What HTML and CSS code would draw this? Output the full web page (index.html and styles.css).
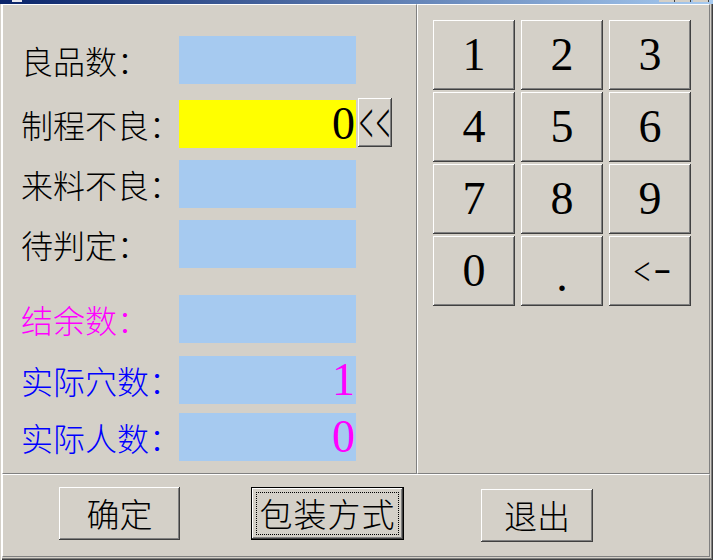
FILE: index.html
```html
<!DOCTYPE html>
<html lang="zh-CN">
<head>
<meta charset="utf-8">
<title>数量输入</title>
<link rel="stylesheet" href="styles.css">
</head>
<body>
<div class="titlebar">
  <span class="ticon"></span>
  <span class="tbtns"><i></i><i></i><i class="close"></i></span>
</div>
<div class="window">
  <div class="panel left">
    <div class="row"><span class="label">良品数：</span><span class="field"></span></div>
    <div class="row"><span class="label">制程不良：</span><span class="field yellow">0</span><button class="btn back"><span class="chev">&lt;&lt;</span></button></div>
    <div class="row"><span class="label">来料不良：</span><span class="field"></span></div>
    <div class="row"><span class="label">待判定：</span><span class="field"></span></div>
    <div class="row"><span class="label magenta">结余数：</span><span class="field"></span></div>
    <div class="row"><span class="label blue">实际穴数：</span><span class="field magenta">1</span></div>
    <div class="row"><span class="label blue">实际人数：</span><span class="field magenta">0</span></div>
  </div>
  <div class="panel right">
    <div class="keypad">
      <button class="btn key">1</button>
      <button class="btn key">2</button>
      <button class="btn key">3</button>
      <button class="btn key">4</button>
      <button class="btn key">5</button>
      <button class="btn key">6</button>
      <button class="btn key">7</button>
      <button class="btn key">8</button>
      <button class="btn key">9</button>
      <button class="btn key">0</button>
      <button class="btn key dot">.</button>
      <button class="btn key bs"><span class="lt">&lt;</span><span class="hy">-</span></button>
    </div>
  </div>
  <div class="panel bottom">
    <button class="btn cmd b-ok">确定</button>
    <button class="btn cmd b-pack">包装方式<span class="focus"></span></button>
    <button class="btn cmd b-exit">退出</button>
  </div>
</div>
</body>
</html>
```

FILE: styles.css
```css
* { box-sizing: border-box; }
html, body { margin: 0; padding: 0; }
body {
  width: 713px;
  height: 560px;
  overflow: hidden;
  background: #d4d0c8;
  font-family: "Noto Sans CJK SC", sans-serif;
  color: #000;
}
.titlebar {
  height: 4px;
  background: linear-gradient(90deg, #0a246a, #a6caf0);
  display: flex;
  justify-content: space-between;
  align-items: flex-start;
  overflow: hidden;
}
.ticon {
  width: 10px;
  height: 2px;
  margin-left: 12px;
  background: #e8e8f0;
}
.tbtns { display: flex; margin-right: 4px; }
.tbtns i {
  display: block;
  width: 16px;
  height: 2px;
  background: #d4d0c8;
  border-right: 1px solid #404040;
}
.tbtns i.close { margin-left: 2px; }

.window {
  height: 556px;
  display: grid;
  grid-template-columns: 415px 293px;
  grid-template-rows: 470px 83px;
  padding: 0 3px 3px 2px;
  box-shadow: inset 1px 0 #d4d0c8, inset 2px 0 #fff, inset -1px -1px #404040, inset -2px -2px #808080;
}
.panel {
  border: 1px solid;
  border-color: #fff #808080 #808080 #fff;
}
.left {
  padding: 31px 0 0 18px;
  display: flex;
  flex-direction: column;
}
.row {
  display: flex;
  align-items: center;
  height: 48px;
  flex: none;
}
.row:nth-child(2) { margin-top: 16px; }
.row:nth-child(3) { margin-top: 12px; }
.row:nth-child(4) { margin-top: 12px; }
.row:nth-child(5) { margin-top: 27px; }
.row:nth-child(6) { margin-top: 13px; }
.row:nth-child(7) { margin-top: 9px; }
.label {
  width: 158px;
  font-size: 32px;
  font-weight: 300;
  line-height: 48px;
  white-space: nowrap;
}
.field {
  width: 177px;
  height: 48px;
  background: #a6caf0;
  font-family: "Liberation Serif", serif;
  font-size: 46px;
  line-height: 48px;
  text-align: right;
  padding-right: 1px;
}
.yellow { background: #ffff00; }
.magenta { color: #ff00ff; }
.blue { color: #0000ff; }

.btn {
  background: #d4d0c8;
  border: 0;
  padding: 0;
  margin: 0;
  color: #000;
  box-shadow: inset -1px -1px #404040, inset 1px 1px #fff, inset -2px -2px #808080;
  display: flex;
  align-items: center;
  justify-content: center;
}
.back {
  width: 34px;
  height: 49px;
  margin-left: 2px;
  align-self: flex-start;
  margin-top: -2px;
  justify-content: flex-start;
  padding-left: 1px;
}
.chev {
  display: inline-block;
  font-family: "Liberation Serif", serif;
  font-size: 40px;
  line-height: 1;
  letter-spacing: 4px;
  transform: scale(0.63, 1.5);
  transform-origin: 0 50%;
}

.keypad {
  display: grid;
  grid-template-columns: repeat(3, 82px);
  grid-auto-rows: 70px;
  column-gap: 6px;
  row-gap: 2px;
  padding: 15px 0 0 15px;
}
.key {
  font-family: "Liberation Serif", serif;
  font-size: 46px;
  line-height: 70px;
}
.key.dot { padding-top: 10px; }
.bs .lt,
.bs .hy {
  display: inline-block;
  font-size: 38px;
  line-height: 1;
}
.bs .lt { transform: scale(0.8, 1.05); }
.bs .hy {
  transform: scaleX(1.4);
  margin-left: 3px;
  margin-top: -6px;
}

.bottom {
  grid-column: 1 / -1;
  display: flex;
  align-items: flex-start;
  padding: 12px 0 0 56px;
}
.cmd {
  height: 53px;
  font-family: "Noto Sans CJK SC", sans-serif;
  font-size: 33px;
  font-weight: 300;
  line-height: 1;
}
.b-ok { width: 121px; }
.b-pack {
  width: 153px;
  margin-left: 71px;
  border: 1px solid #000;
  position: relative;
  letter-spacing: 1px;
}
.focus {
  position: absolute;
  left: 4px;
  top: 4px;
  right: 4px;
  bottom: 4px;
  border: 1px dotted #000;
}
.b-exit {
  width: 112px;
  margin-left: 77px;
  margin-top: 2px;
}
```
